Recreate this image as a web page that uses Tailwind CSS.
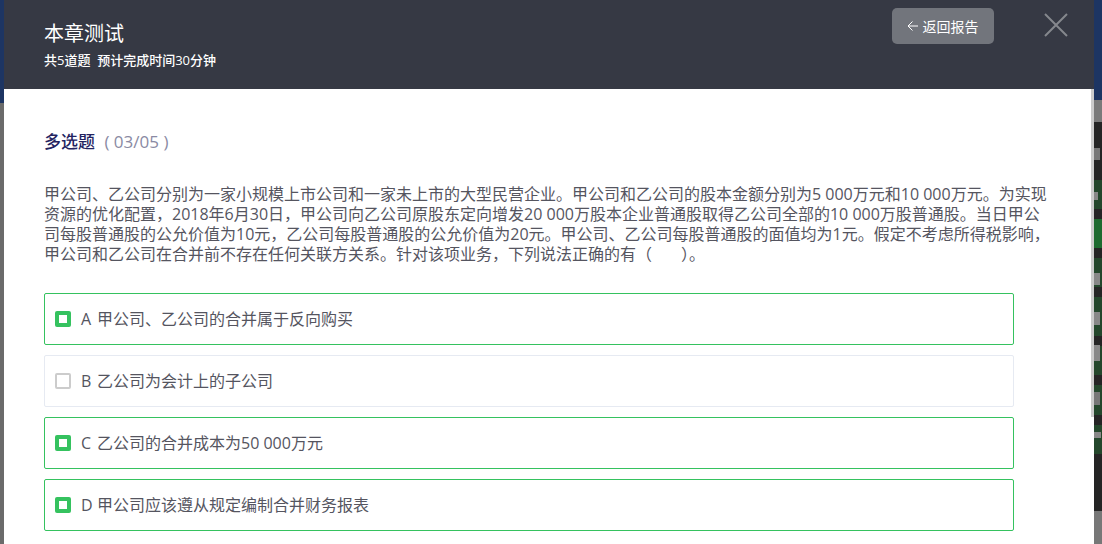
<!DOCTYPE html>
<html lang="en">
<head>
    <meta charset="UTF-8">
    <title>本章测试</title>
    <script src="https://cdn.jsdelivr.net/npm/@tailwindcss/browser@4"></script>
</head>
<body class="relative h-[544px] w-[1102px] overflow-hidden bg-[#6b6b6b] font-['Open_Sans','Noto_Sans_CJK_SC',sans-serif]">
    <!-- Backdrop strips either side of the dialog -->
    <div class="absolute left-0 top-0 h-[103px] w-[4px] bg-[#1d3563]"></div>
    <div class="absolute right-0 top-0 flex h-[544px] w-[8px] flex-col bg-[#252525]">
        <div class="h-[103px] bg-[#1d3563]"></div>
        <div class="h-[22px] bg-[#7a7a7a]"></div>
        <div class="mt-[58px] h-[30px] bg-[#24472c]"></div>
        <div class="mt-[10px] h-[30px] bg-[#1e6b30]"></div>
        <div class="mt-[10px] h-[30px] bg-[#24472c]"></div>
        <div class="mt-[10px] h-[40px] bg-[#24472c]"></div>
        <div class="mt-[10px] h-[30px] bg-[#24472c]"></div>
        <div class="mt-[10px] h-[30px] bg-[#24472c]"></div>
        <div class="mt-[10px] h-[30px] bg-[#24472c]"></div>
        <div class="mt-[57px] h-[34px] bg-[#777777]"></div>
        <!-- Bits of the icons behind the overlay -->
        <div class="absolute left-0 top-[148px] h-[12px] w-[6px] bg-[#777777]"></div>
        <div class="absolute left-0 top-[192px] h-[8px] w-[4px] bg-[#888888]"></div>
        <div class="absolute left-0 top-[273px] h-[12px] w-[6px] bg-[#888888]"></div>
        <div class="absolute left-0 top-[312px] h-[13px] w-[6px] bg-[#888888]"></div>
        <div class="absolute left-0 top-[345px] h-[16px] w-[6px] bg-[#888888]"></div>
        <div class="absolute left-0 top-[392px] h-[13px] w-[6px] bg-[#777777]"></div>
        <div class="absolute left-0 top-[432px] h-[6px] w-[7px] bg-[#888888]"></div>
    </div>

    <!-- Dialog -->
    <div class="relative ml-[4px] w-[1090px]">
        <div class="flex h-[89px] justify-between bg-[#363944] pl-[40px] pr-[26px]">
            <div>
                <h1 class="mt-[22px] text-[20px] leading-[24px] text-white">本章测试</h1>
                <p class="mt-[5px] text-[13px] font-medium leading-[18px] text-white">共5道题&nbsp; 预计完成时间30分钟</p>
            </div>
            <div class="flex items-start">
                <button class="mt-[8px] flex h-[36px] w-[102px] items-center justify-center gap-[4px] rounded-[5px] bg-[#72757c] pr-[1px] text-[14px] text-white">
                    <svg width="12" height="12" viewBox="0 0 12 12" fill="none" stroke="white" stroke-width="1"><path d="M11 6H1M5.500 1.500L1 6L5.500 10.500"/></svg>
                    返回报告
                </button>
                <svg class="ml-[50px] mt-[13px]" width="24" height="24" viewBox="0 0 24 24" fill="none" stroke="#85878d" stroke-width="2"><path d="M1 1L23 23M23 1L1 23"/></svg>
            </div>
        </div>

        <div class="h-[455px] bg-white pl-[40px] pr-[40px]">
            <div class="pt-[42px] text-[17px] leading-[22px]">
                <span class="font-medium text-[#23235f]">多选题</span>
                <span class="ml-[5px] text-[#8a8aa3]">( 03/05 )</span>
            </div>
            <p class="mt-[31px] text-[16px] leading-[20px] text-[#55555f]">甲公司、乙公司分别为一家小规模上市公司和一家未上市的大型民营企业。甲公司和乙公司的股本金额分别为5 000万元和10 000万元。为实现资源的优化配置，2018年6月30日，甲公司向乙公司原股东定向增发20 000万股本企业普通股取得乙公司全部的10 000万股普通股。当日甲公司每股普通股的公允价值为10元，乙公司每股普通股的公允价值为20元。甲公司、乙公司每股普通股的面值均为1元。假定不考虑所得税影响，甲公司和乙公司在合并前不存在任何关联方关系。针对该项业务，下列说法正确的有（&nbsp;&nbsp;&nbsp;&nbsp;&nbsp;&nbsp;&nbsp;）。</p>
            <div class="mt-[29px] flex w-[970px] flex-col gap-[10px] text-[16px] text-[#55555f]">
                <div class="flex h-[52px] items-center rounded-[2px] border border-[#35c25f] pl-[10px]">
                    <span class="mr-[10px] flex h-[16px] w-[16px] items-center justify-center rounded-[2px] bg-[#35c25f]"><span class="h-[8px] w-[8px] bg-white"></span></span>
                    <span class="w-[16px]">A</span>甲公司、乙公司的合并属于反向购买
                </div>
                <div class="flex h-[52px] items-center rounded-[2px] border border-[#e6eaf2] pl-[10px]">
                    <span class="mr-[10px] h-[16px] w-[16px] rounded-[2px] border-2 border-[#cccccc]"></span>
                    <span class="w-[16px]">B</span>乙公司为会计上的子公司
                </div>
                <div class="flex h-[52px] items-center rounded-[2px] border border-[#35c25f] pl-[10px]">
                    <span class="mr-[10px] flex h-[16px] w-[16px] items-center justify-center rounded-[2px] bg-[#35c25f]"><span class="h-[8px] w-[8px] bg-white"></span></span>
                    <span class="w-[16px]">C</span>乙公司的合并成本为50 000万元
                </div>
                <div class="flex h-[52px] items-center rounded-[2px] border border-[#35c25f] pl-[10px]">
                    <span class="mr-[10px] flex h-[16px] w-[16px] items-center justify-center rounded-[2px] bg-[#35c25f]"><span class="h-[8px] w-[8px] bg-white"></span></span>
                    <span class="w-[16px]">D</span>甲公司应该遵从规定编制合并财务报表
                </div>
            </div>
        </div>
        <!-- Scrollbar thumb -->
        <div class="absolute right-0 top-[89px] h-[328px] w-[3px] bg-[#cccccc]"></div>
    </div>
</body>
</html>
